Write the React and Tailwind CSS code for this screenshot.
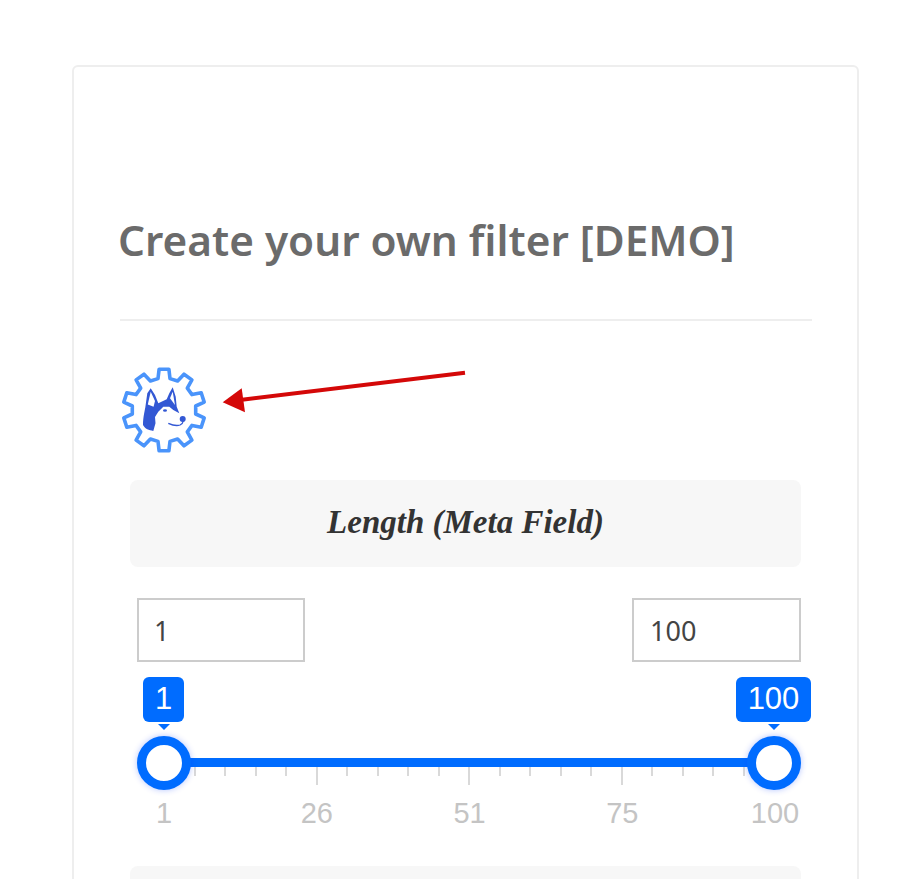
import React from 'react'

// gear outline, 10 teeth, centre of the logo
const gearPoints = () => {
    const pts = []
    const cx = 44, cy = 45, teeth = 10, outer = 41, inner = 32
    const step = (Math.PI * 2) / teeth
    for (let i = 0; i < teeth; i++) {
        const a = -Math.PI / 2 + i * step
        const corners = [
            [a - step * 0.3, inner],
            [a - step * 0.19, outer],
            [a + step * 0.19, outer],
            [a + step * 0.3, inner],
        ]
        corners.forEach(([t, r]) => {
            pts.push(`${(cx + Math.cos(t) * r).toFixed(1)},${(cy + Math.sin(t) * r).toFixed(1)}`)
        })
    }
    return pts.join(' ')
}

const LogoWithArrow = () => (
    <svg width="350" height="90" viewBox="0 0 350 90" className="block">
        <polygon points={gearPoints()} fill="none" stroke="#4a94fb" strokeWidth="3.6" strokeLinejoin="round" />
        {/* husky head */}
        <path
            d="M23 60 C23 52 25 45 25.5 41 L27.3 28.3 L30.7 23.3 L35 30 L38.3 38.3 L46.7 34.3 L49.3 28.3 L52.7 22.3 L55.7 31.7 L56.7 41.7 L59.3 48.3 L53.3 45 L49.3 41.7 L43.3 41.7 L38.3 46.7 L35 52 L35.5 58.3 L33.3 66 C29 65 25 64 23 60 Z"
            fill="#3358d4"
        />
        <path d="M30.7 26.7 L27.8 39.5 L33.6 41.7 L35 36 Z" fill="#ffffff" />
        <path d="M52.7 26.7 L50 33.3 L55 40 Z" fill="#ffffff" />
        <ellipse cx="45" cy="45.5" rx="2" ry="1.3" fill="#3358d4" />
        <circle cx="62.7" cy="54" r="3" fill="#3358d4" />
        <path d="M48.3 58.3 C52 60 57 61 60 60 C62 59 63 58 63.3 56" stroke="#3358d4" strokeWidth="1.3" fill="none" />
        {/* arrow */}
        <path d="M345 7.7 L120 35" stroke="#d40808" strokeWidth="4" fill="none" />
        <polygon points="102.7,37.3 121.7,23.3 125,47.3" fill="#d40808" />
    </svg>
)

const ValueTip = ({ value, className }) => (
    <div className={`flex flex-col items-center ${className}`}>
        <div className="flex h-[45px] w-full items-center justify-center rounded-md bg-[#006cff] text-[31px] text-white">
            {value}
        </div>
        <div className="mt-[2px] h-0 w-0 border-x-[6px] border-t-[6px] border-x-transparent border-t-[#006cff]" />
    </div>
)

const Handle = () => (
    <div className="relative h-[54px] w-[54px] rounded-full border-[9px] border-[#006cff] bg-white shadow-[0_0_6px_rgba(0,60,255,0.3)]" />
)

const ticks = Array.from({ length: 21 }, (_, i) => i)
const labels = ['1', '26', '51', '75', '100']

const App = () => {
    return (
        <div className="h-[879px] overflow-hidden bg-white pl-[72px] pr-[40px] pt-[65px]">
            <div className="h-[900px] rounded-md border-2 border-[#eeeeee] pl-[46px] pr-[45px] pt-[137px]">
                <h2 className="-ml-[2px] whitespace-nowrap font-['Noto_Sans',sans-serif] text-[42.3px] font-semibold leading-[72px] text-[#6b6b6b]">
                    Create your own filter [DEMO]
                </h2>
                <div className="mt-[43px] h-[2px] bg-[#eeeeee]" />

                <div className="mt-[44px]">
                    <LogoWithArrow />
                </div>

                <div className="ml-[10px] mt-[25px] w-[671px]">
                    <div className="flex h-[87px] items-center justify-center rounded-lg bg-[#f7f7f7] pb-[2px] font-['Liberation_Serif',cursive] text-[33px] font-bold italic text-[#333333]">
                        Length (Meta Field)
                    </div>

                    <div className="mt-[31px] flex justify-between pl-[7px]">
                        <div className="flex h-[64px] w-[168px] items-center border-2 border-[#cccccc] pl-[15px] pt-[2px] font-['Noto_Sans',sans-serif] text-[27px] text-[#444444]">
                            1
                        </div>
                        <div className="flex h-[64px] w-[169px] items-center border-2 border-[#cccccc] pl-[16px] pt-[2px] font-['Noto_Sans',sans-serif] text-[27px] text-[#444444]">
                            100
                        </div>
                    </div>

                    {/* slider */}
                    <div className="ml-[7px] mt-[15px] font-['Liberation_Sans',sans-serif]">
                        <div className="flex justify-between pb-[6px] pl-[6px]">
                            <ValueTip value="1" className="w-[41px]" />
                            <ValueTip value="100" className="-mr-[10px] w-[75px]" />
                        </div>

                        <div className="relative flex justify-between">
                            <div className="absolute inset-x-[27px] top-[22px] h-[9px] bg-[#006cff]" />
                            <div className="absolute inset-x-[26px] top-[31px] flex justify-between">
                                {ticks.map((i) => (
                                    <div
                                        key={i}
                                        className={`w-[2px] bg-[#d9d9d9] ${i % 5 === 0 ? 'h-[18px]' : 'h-[9px]'}`}
                                    />
                                ))}
                            </div>
                            <Handle />
                            <Handle />
                        </div>

                        <div className="mt-[6px] flex justify-between pl-[27px] pr-[26px] text-[29px] leading-[34px] text-[#c4c4c4]">
                            {labels.map((label) => (
                                <div key={label} className="flex w-0 justify-center">
                                    {label}
                                </div>
                            ))}
                        </div>
                    </div>

                    <div className="mt-[36px] h-[60px] rounded-lg bg-[#f7f7f7]" />
                </div>
            </div>
        </div>
    )
}

export default App
